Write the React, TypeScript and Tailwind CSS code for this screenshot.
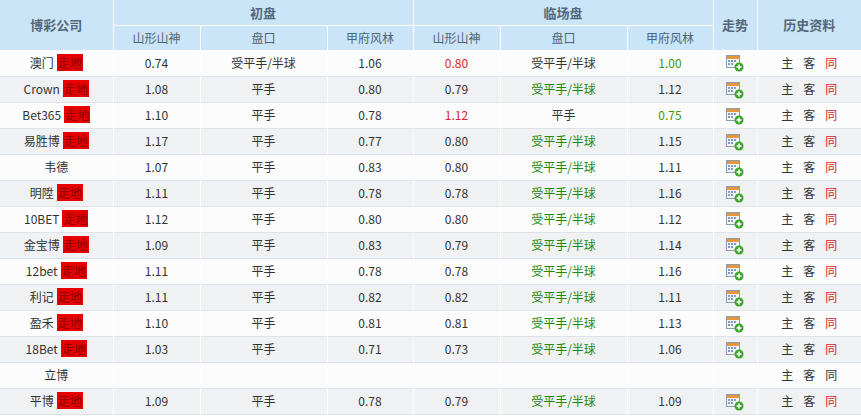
const rows: [string, boolean, string, string, string, string, string, string, string, string][] = [
  ["澳门", true, "0.74", "受平手/半球", "1.06", "0.80", "受平手/半球", "1.00", "r", "g"],
  ["Crown", true, "1.08", "平手", "0.80", "0.79", "*受平手/半球", "1.12", "", ""],
  ["Bet365", true, "1.10", "平手", "0.78", "1.12", "平手", "0.75", "r", "g"],
  ["易胜博", true, "1.17", "平手", "0.77", "0.80", "*受平手/半球", "1.15", "", ""],
  ["韦德", false, "1.07", "平手", "0.83", "0.80", "*受平手/半球", "1.11", "", ""],
  ["明陞", true, "1.11", "平手", "0.78", "0.78", "*受平手/半球", "1.16", "", ""],
  ["10BET", true, "1.12", "平手", "0.80", "0.80", "*受平手/半球", "1.12", "", ""],
  ["金宝博", true, "1.09", "平手", "0.83", "0.79", "*受平手/半球", "1.14", "", ""],
  ["12bet", true, "1.11", "平手", "0.78", "0.78", "*受平手/半球", "1.16", "", ""],
  ["利记", true, "1.11", "平手", "0.82", "0.82", "*受平手/半球", "1.11", "", ""],
  ["盈禾", true, "1.10", "平手", "0.81", "0.81", "*受平手/半球", "1.13", "", ""],
  ["18Bet", true, "1.03", "平手", "0.71", "0.73", "*受平手/半球", "1.06", "", ""],
  ["立博", false, "", "", "", "", "", "", "", ""],
  ["平博", true, "1.09", "平手", "0.78", "0.79", "*受平手/半球", "1.09", "", ""],
]

const tone = (c: string) => (c === "r" ? "text-[#e0232b]" : c === "g" ? "text-[#3f9a00]" : "")

function TrendIcon() {
  return (
    <svg width="18" height="17" viewBox="0 0 18 17" className="inline-block">
      <rect x="0.5" y="0.5" width="13" height="12" fill="#f4f4f4" stroke="#8a9ab0" />
      <rect x="1" y="1" width="12" height="3" fill="#e8963a" />
      <g fill="#7f9ec4">
        <rect x="2" y="5" width="2" height="2" />
        <rect x="5" y="5" width="2" height="2" />
        <rect x="8" y="5" width="2" height="2" />
        <rect x="2" y="8" width="2" height="2" />
        <rect x="5" y="8" width="2" height="2" />
      </g>
      <circle cx="13" cy="12" r="4.5" fill="#3ea52c" />
      <path d="M13 9.5v5M10.5 12h5" stroke="#fff" strokeWidth="1.6" />
    </svg>
  )
}

export default function App() {
  const head = "border-r border-white font-bold text-[13px] text-[#55687b]"
  const th = "border-r border-white font-normal text-[#4f6478]"
  const td = "border-r border-white"
  return (
    <div className="w-[861px] h-[416px] overflow-hidden bg-white" style={{ fontFamily: '"Noto Sans CJK SC", sans-serif' }}>
      <table className="w-[861px] table-fixed border-collapse text-[12px] text-[#333] text-center">
        <colgroup>
          <col className="w-[113px]" />
          <col className="w-[87px]" />
          <col className="w-[127px]" />
          <col className="w-[86px]" />
          <col className="w-[87px]" />
          <col className="w-[127px]" />
          <col className="w-[86px]" />
          <col className="w-[44px]" />
          <col className="w-[104px]" />
        </colgroup>
        <thead className="bg-[#c9e5f7]">
          <tr className="h-[25px]">
            <th rowSpan={2} className={head}>博彩公司</th>
            <th colSpan={3} className={head + " border-b"}>初盘</th>
            <th colSpan={3} className={head + " border-b"}>临场盘</th>
            <th rowSpan={2} className={head}>走势</th>
            <th rowSpan={2} className="font-bold text-[13px] text-[#55687b]">历史资料</th>
          </tr>
          <tr className="h-[25px]">
            {["山形山神", "盘口", "甲府风林", "山形山神", "盘口", "甲府风林"].map((t, i) => (
              <th key={i} className={th}>{t}</th>
            ))}
          </tr>
        </thead>
        <tbody>
          {rows.map((r, i) => {
            const green = r[6].startsWith("*")
            return (
              <tr key={i} className={"h-[26px] border-b border-[#dde3e8] " + (i % 2 ? "bg-[#f0f1f2]" : "bg-[#fcfcfc]")}>
                <td className={td}>
                  {r[0]}
                  {r[1] && <span className="ml-[3px] bg-[#e80000] text-[#8a0000] px-[1px]">走地</span>}
                </td>
                <td className={td}>{r[2]}</td>
                <td className={td}>{r[3]}</td>
                <td className={td}>{r[4]}</td>
                <td className={td + " " + tone(r[8])}>{r[5]}</td>
                <td className={td + (green ? " text-[#1c8a0c]" : "")}>{r[6].replace("*", "")}</td>
                <td className={td + " " + tone(r[9])}>{r[7]}</td>
                <td className={td}>{r[2] && <TrendIcon />}</td>
                <td>
                  <span className="mx-[5px]">主</span>
                  <span className="mx-[5px]">客</span>
                  <span className={"mx-[5px] " + (r[2] ? "text-[#e0232b]" : "")}>同</span>
                </td>
              </tr>
            )
          })}
        </tbody>
      </table>
    </div>
  )
}
